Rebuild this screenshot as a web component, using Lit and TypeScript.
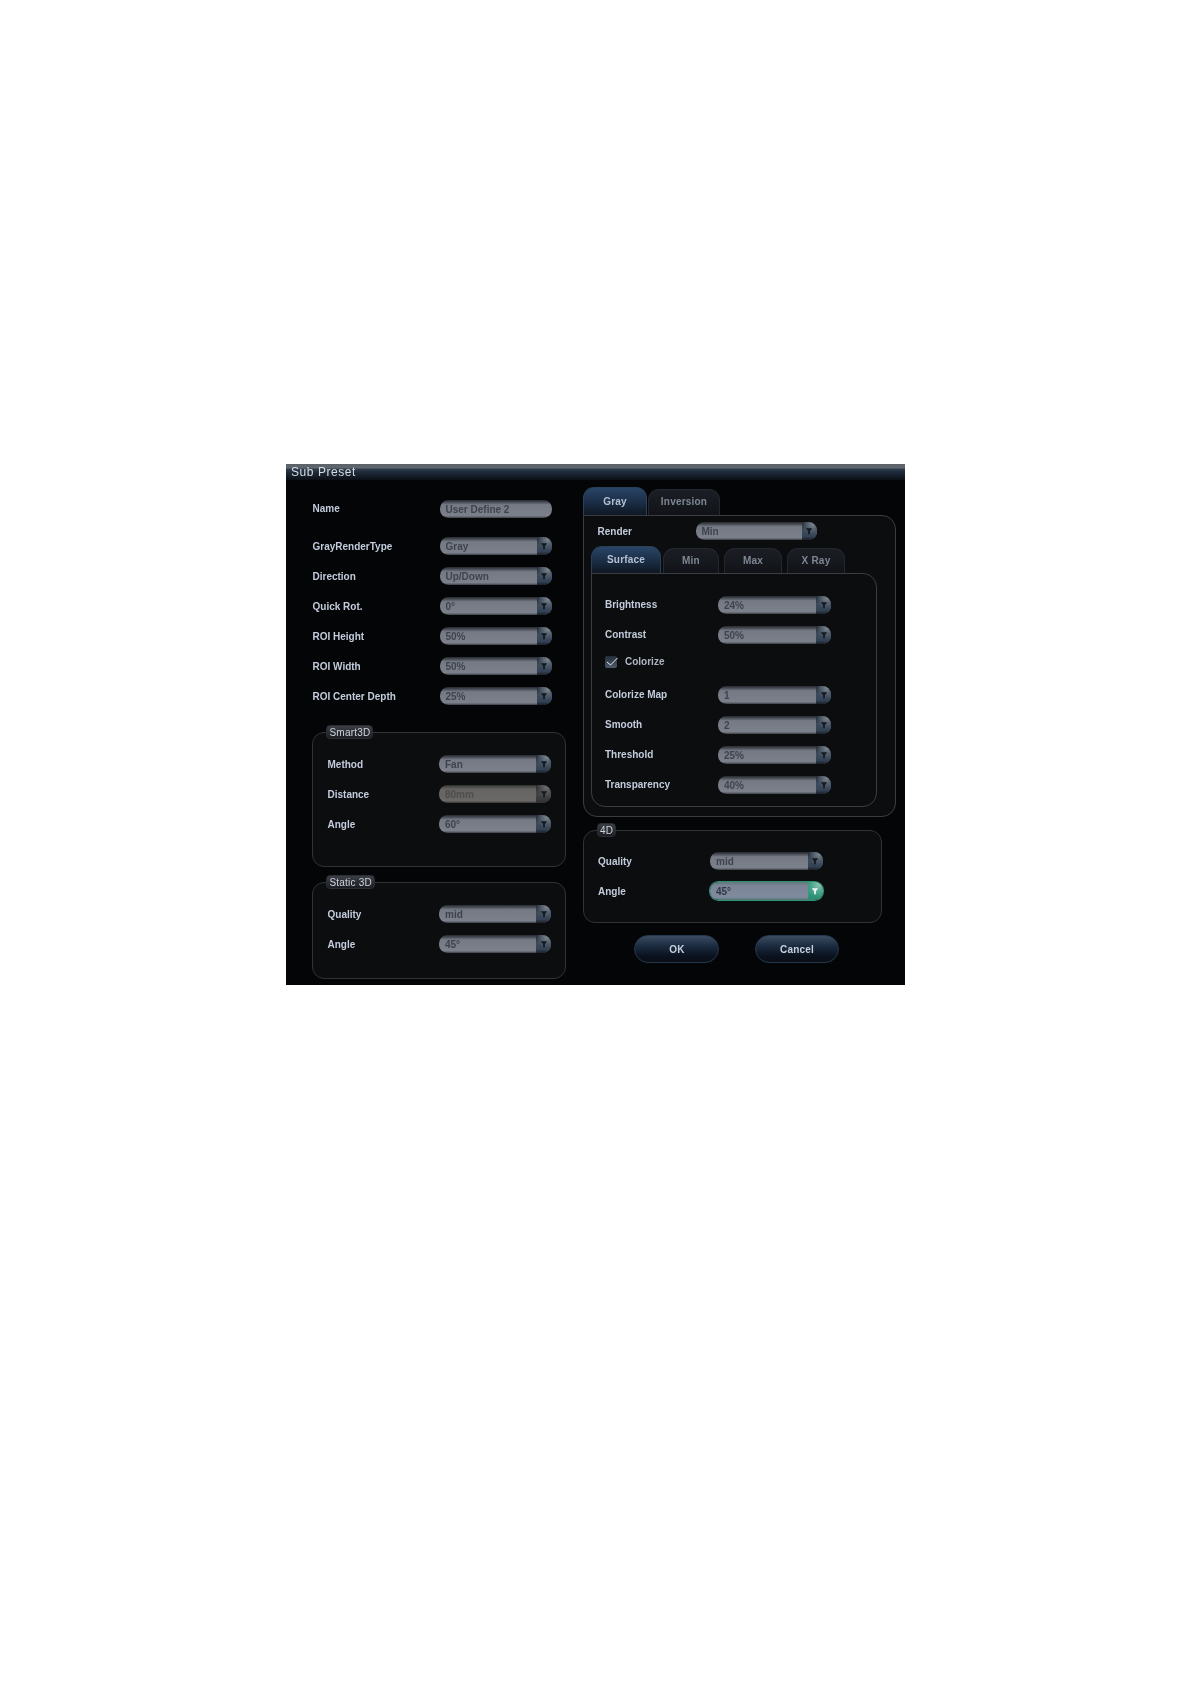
import { LitElement, html, css } from "lit";
import { customElement } from "lit/decorators.js";

const arrow = html`<svg class="arr" viewBox="0 0 8 8"><path d="M.8 1.2H7.2L4.9 4.2V7.2H3.1V4.2Z"/></svg>`;

@customElement("app-root")
export class AppRoot extends LitElement {
  static styles = css`
    :host { display: block; height: 1684px; background: #fff; font-family: "Liberation Sans", Arial, sans-serif; }
    .dlg { position: absolute; box-sizing: border-box; width: 619px; height: 521px; left: 286px; top: 464px; background: #040506; overflow: hidden; filter: blur(0.4px); }
    .title { height: 16px; box-sizing: border-box; background: linear-gradient(#5d6268 0, #5f666e 25%, #2c3a4c 32%, #1a2533 60%, #0b0f15 100%); color: #d6dade; font-size: 12px; letter-spacing: .55px; line-height: 16px; padding-left: 5px; }
    .body { display: grid; grid-template-columns: 297px 322px; }
    .left { padding: 13.5px 0 0 26.5px; }
    .right { padding: 7px 0 0 0; }
    .row { display: flex; align-items: center; height: 30px; color: #c3ccdc; font-size: 10px; font-weight: 700; letter-spacing: 0; }
    .row .lab { width: var(--lw, 127px); white-space: nowrap; flex: none; }
    .name-row { margin-bottom: 7.5px; }
    .sel { position: relative; box-sizing: border-box; height: 18px; width: var(--sw, 112px); flex: none; border-radius: 8.5px; background: linear-gradient(#26292f 0, #41454d 10%, #747983 26%, #7b808a 88%, #3a3e45 100%); color: #3e444e; padding-left: 6px; line-height: 19px; font-size: 10px; font-weight: 700; letter-spacing: 0; overflow: hidden; }
    .sel .btn { position: absolute; right: 0; top: 0; bottom: 0; width: 15px; background: radial-gradient(circle at 72% 14%, #7d848b 0, #4f5c6b 30%, transparent 55%), linear-gradient(#262b32, #3d4b5c 45%, #334356 80%, #1b2028); display: flex; align-items: center; justify-content: center; }
    .arr { width: 8px; height: 8px; fill: #161a20; }
    .dis { background: linear-gradient(#2c2c2c, #4b4b4a 10%, #676563 26%, #6a6866 88%, #363636 100%); color: #4e4d4c; }
    .dis .btn { background: radial-gradient(circle at 72% 14%, #6d6d70 0, #505054 30%, transparent 55%), linear-gradient(#2a2a2c, #454548 50%, #303032); }
    .focus { background: linear-gradient(#5b7a78, #7b8596 20%, #808a9e 85%, #4d7670); box-shadow: 0 0 0 1px #2f9072; color: #2f3744; }
    .focus .btn { background: radial-gradient(circle at 72% 14%, #8cc2b2 0, #4aa58c 40%, transparent 65%), linear-gradient(#2f8e74, #3b9d83 50%, #2b8a70); }
    .focus .arr { fill: #f2f5f4; }
    .input { padding-right: 6px; }

    .group { position: relative; box-sizing: border-box; border: 1px solid #2f3338; border-radius: 12px; background: #0c0d0f; }
    .legend { position: absolute; top: -8px; left: 13px; box-sizing: border-box; height: 14px; line-height: 13px; padding: 0 2px 0 3px; border-radius: 4px; background: linear-gradient(#3b3e44, #1c1e22); border: 1px solid #2a2d31; color: #cdd4df; font-size: 10px; letter-spacing: .2px; white-space: nowrap; }
    .smart { width: 254px; height: 135px; margin: 21px 0 0 -1px; padding: 16px 0 0 15px; --lw: 111.5px; }
    .static { width: 254px; height: 97px; margin: 15px 0 0 -1px; padding: 16px 0 0 15px; --lw: 111.5px; }

    .tabs { display: flex; align-items: flex-end; height: 28px; gap: 1px; }
    .tab { box-sizing: border-box; height: 26px; border: 1px solid #23282f; border-bottom: 0; border-radius: 11px 11px 0 0; background: linear-gradient(#1b1e24, #111318); color: #7f8794; font-size: 10px; font-weight: 700; letter-spacing: .2px; text-align: center; line-height: 24px; }
    .tab.on { height: 28px; border-color: #2b3f58; background: linear-gradient(#294566, #1b2f48 50%, #0f1722); color: #b4c0d2; line-height: 28px; }
    .panel { box-sizing: border-box; border: 1px solid #3a3e43; border-radius: 0 14px 14px 14px; background: #0c0d0f; }
    .outer { width: 313px; height: 302px; padding: 5.5px 0 0 7px; }
    .outer > .row { height: 19px; margin-left: 6.5px; --lw: 98px; --sw: 121px; }
    .subs { margin-top: 5.5px; height: 27px; }
    .subs .tab { height: 25px; line-height: 24px; }
    .subs .tab.on { height: 27px; line-height: 25px; }
    .inner { width: 286px; height: 234px; padding: 15.5px 0 0 13px; --lw: 113px; --sw: 113px; }
    .inner .row { height: 30px; }
    .row.check { height: 24px; margin-bottom: 6px; color: #aeb6c4; }
    .box { box-sizing: border-box; width: 12px; height: 12px; margin-right: 8px; border-radius: 2px; background: linear-gradient(#252d38, #4d5a6b); display: flex; overflow: visible; }
    .box svg { width: 12px; height: 12px; fill: none; stroke: #e8edf3; stroke-width: 1; overflow: visible; }
    .four { width: 299px; height: 93px; margin: 13px 0 0 0; padding: 15px 0 0 14px; --lw: 112px; --sw: 112.5px; }
    .four .legend { left: 13px; padding: 0 2px; }
    .btns { display: flex; margin: 12px 0 0 51px; gap: 36px; }
    .b { box-sizing: border-box; height: 28px; border-radius: 14px; border: 1px solid #26384f; background: linear-gradient(#3a4c62, #1a2a3e 40%, #0b1320 75%, #0a0e15); color: #c9d0dc; font-size: 10px; font-weight: 700; letter-spacing: .2px; line-height: 28px; text-align: center; }
    .ok { width: 85px; padding-left: 1px; }
    .cancel { width: 84px; }
    .w64 { width: 64px; }
    .w72 { width: 72px; }
    .w70 { width: 70px; margin-right: 1px; }
    .w57 { width: 56px; }
    .w59 { width: 58px; margin-left: 4px; }
  `;

  sel(v: string, cls = "") {
    return html`<div class="sel ${cls}">${v}<span class="btn">${arrow}</span></div>`;
  }
  row(l: string, v: string, cls = "") {
    return html`<div class="row"><span class="lab">${l}</span>${this.sel(v, cls)}</div>`;
  }

  render() {
    return html`<div class="dlg">
      <div class="title">Sub Preset</div>
      <div class="body">
        <div class="left">
          <div class="row name-row"><span class="lab">Name</span><div class="sel input">User Define 2</div></div>
          ${this.row("GrayRenderType", "Gray")}
          ${this.row("Direction", "Up/Down")}
          ${this.row("Quick Rot.", "0°")}
          ${this.row("ROI Height", "50%")}
          ${this.row("ROI Width", "50%")}
          ${this.row("ROI Center Depth", "25%")}
          <div class="group smart">
            <div class="legend">Smart3D</div>
            ${this.row("Method", "Fan")}
            ${this.row("Distance", "80mm", "dis")}
            ${this.row("Angle", "60°")}
          </div>
          <div class="group static">
            <div class="legend">Static 3D</div>
            ${this.row("Quality", "mid")}
            ${this.row("Angle", "45°")}
          </div>
        </div>
        <div class="right">
          <div class="tabs">
            <div class="tab on w64">Gray</div>
            <div class="tab w72">Inversion</div>
          </div>
          <div class="panel outer">
            ${this.row("Render", "Min")}
            <div class="tabs subs">
              <div class="tab on w70">Surface</div>
              <div class="tab w57">Min</div>
              <div class="tab w59">Max</div>
              <div class="tab w59">X Ray</div>
            </div>
            <div class="panel inner">
              ${this.row("Brightness", "24%")}
              ${this.row("Contrast", "50%")}
              <div class="row check"><span class="box"><svg viewBox="0 0 12 12"><path d="M2 6l3.5 3 7-7"/></svg></span>Colorize</div>
              ${this.row("Colorize Map", "1")}
              ${this.row("Smooth", "2")}
              ${this.row("Threshold", "25%")}
              ${this.row("Transparency", "40%")}
            </div>
          </div>
          <div class="group four">
            <div class="legend">4D</div>
            ${this.row("Quality", "mid")}
            ${this.row("Angle", "45°", "focus")}
          </div>
          <div class="btns">
            <div class="b ok">OK</div>
            <div class="b cancel">Cancel</div>
          </div>
        </div>
      </div>
    </div>`;
  }
}
